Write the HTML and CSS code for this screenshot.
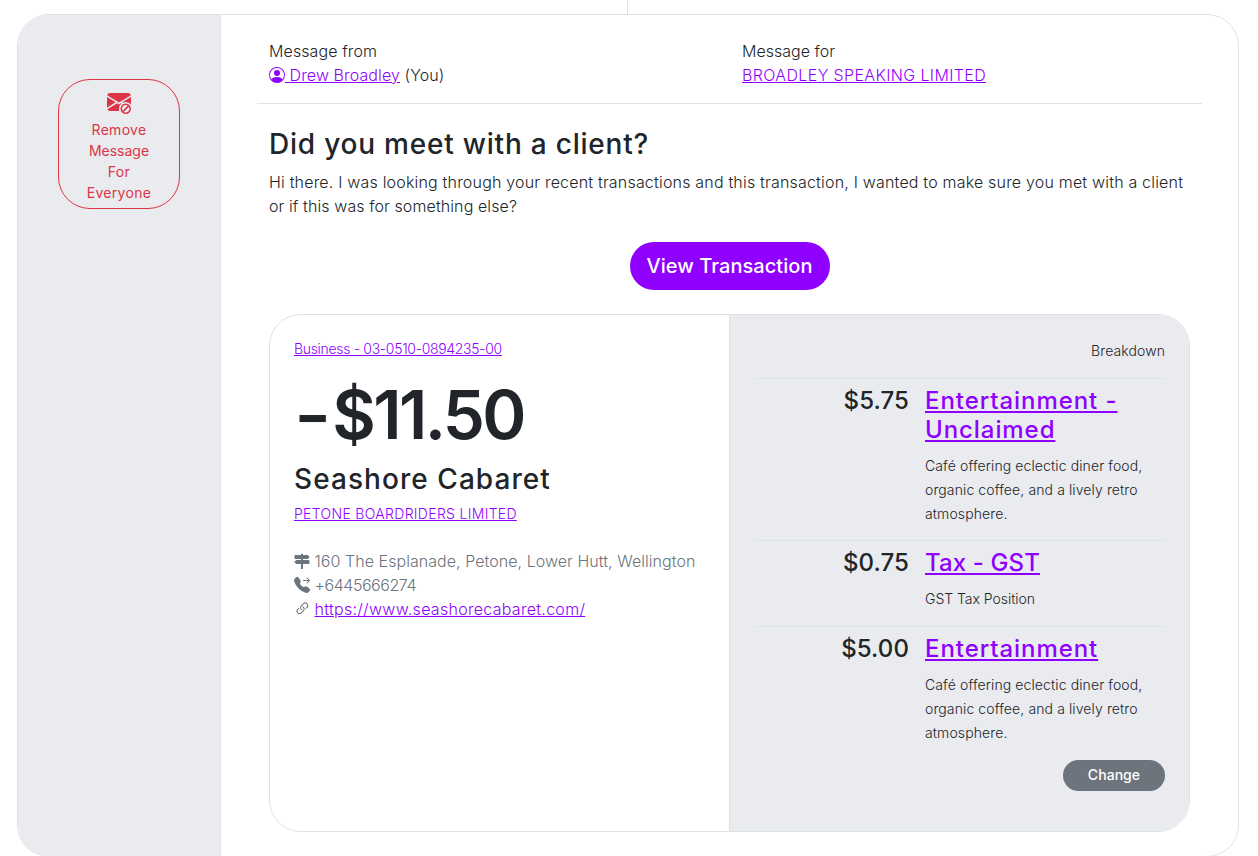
FILE: index.html
```html
<!DOCTYPE html>
<html lang="en">
<head>
<meta charset="utf-8">
<title>Message</title>
<link rel="stylesheet" href="styles.css">
</head>
<body>
<div class="thread-line"></div>
<main class="message">
  <aside class="sidebar">
    <button class="remove">
      <svg class="remove-icon" viewBox="0 0 16 16" fill="currentColor"><path d="M.05 3.555A2 2 0 0 1 2 2h12a2 2 0 0 1 1.950 1.555L8 8.414zM0 4.697v7.104l5.803-3.558zm6.761 4.130-6.570 4.027A2 2 0 0 0 2 14h6.256A4.500 4.500 0 0 1 8 12.500a4.490 4.490 0 0 1 1.606-3.446l-.367-.225L8 9.586zM16 4.697v4.974A4.490 4.490 0 0 0 12.500 8a4.500 4.500 0 0 0-1.965.450l-.338-.207z"/><path d="M12.500 9a3.500 3.500 0 1 1 0 7 3.500 3.500 0 0 1 0-7m-2.500 3.500c0 .501.147.968.400 1.360l3.460-3.460A2.500 2.500 0 0 0 10 12.500m2.500 2.500a2.500 2.500 0 0 0 2.100-3.860l-3.460 3.460c.392.253.860.400 1.360.400"/></svg>
      <span>Remove</span>
      <span class="tight">Message</span>
      <span>For</span>
      <span>Everyone</span>
    </button>
  </aside>
  <section class="content">
    <header class="parties">
      <div class="party">
        <div>Message from</div>
        <div><a class="person" href="#"><svg class="icon" viewBox="0 0 16 16" fill="currentColor"><path d="M11 6a3 3 0 1 1-6 0 3 3 0 0 1 6 0"/><path fill-rule="evenodd" d="M0 8a8 8 0 1 1 16 0A8 8 0 0 1 0 8m8-7a7 7 0 0 0-5.468 11.370C3.242 11.226 4.805 10 8 10s4.757 1.225 5.468 2.370A7 7 0 0 0 8 1"/></svg><span>&nbsp;Drew Broadley</span></a> (You)</div>
      </div>
      <div class="party">
        <div class="recipient-label">Message for</div>
        <div><a class="recipient" href="#">BROADLEY SPEAKING LIMITED</a></div>
      </div>
    </header>
    <div class="body">
      <h2 class="title question">Did you meet with a client?</h2>
      <p class="copy"><span class="copy-lead">Hi there. I was looking through your recent transactions and this transaction, I wanted to make sure you met with a client</span><br>or if this was for something else?</p>
      <button class="view">View Transaction</button>
      <article class="card">
        <div class="merchant">
          <div class="account"><a href="#">Business - 03-0510-0894235-00</a></div>
          <div class="amount"><span class="minus">-</span>$11.50</div>
          <h3 class="title name">Seashore Cabaret</h3>
          <div class="company"><a href="#">PETONE BOARDRIDERS LIMITED</a></div>
          <ul class="contact">
            <li><svg class="icon" viewBox="0 0 16 16" fill="currentColor"><path d="M7 7V6H1.500a1 1 0 0 1-1-1V3a1 1 0 0 1 1-1H7v-.600a1 1 0 0 1 2 0V2h4.500a1 1 0 0 1 .8.400L15.700 4l-1.400 1.600a1 1 0 0 1-.8.400H9v1h5.500a1 1 0 0 1 1 1v2a1 1 0 0 1-1 1H9v5H7v-5H2.500a1 1 0 0 1-.8-.400L.3 9l1.400-1.600a1 1 0 0 1 .8-.400z"/></svg><span class="address">160 The Esplanade, Petone, Lower Hutt, Wellington</span></li>
            <li><svg class="icon" viewBox="0 0 16 16" fill="currentColor"><path d="M1.885.511a1.745 1.745 0 0 1 2.610.163L6.290 2.980c.329.423.445.974.315 1.494l-.547 2.190a.680.680 0 0 0 .178.643l2.457 2.457a.680.680 0 0 0 .644.178l2.189-.547a1.750 1.750 0 0 1 1.494.315l2.306 1.794c.829.645.905 1.870.163 2.611l-1.034 1.034c-.740.740-1.846 1.065-2.877.702a18.600 18.600 0 0 1-7.010-4.420 18.600 18.600 0 0 1-4.420-7.009c-.362-1.030-.037-2.137.703-2.877zM12.646.646a.5.5 0 0 1 .708 0l2.500 2.500a.5.5 0 0 1 0 .708l-2.500 2.500a.5.5 0 0 1-.708-.708L14.293 4H9.500a.5.5 0 0 1 0-1h4.793l-1.647-1.646a.5.5 0 0 1 0-.708"/></svg><span class="phone">+6445666274</span></li>
            <li><svg class="icon link" viewBox="0 0 16 16" fill="currentColor"><path d="M6.354 5.500H4a3 3 0 0 0 0 6h3a3 3 0 0 0 2.830-4H9q-.130 0-.250.031A2 2 0 0 1 7 10.500H4a2 2 0 1 1 0-4h1.535c.218-.376.495-.714.820-1z"/><path d="M9 5.500a3 3 0 0 0-2.830 4h1.098A2 2 0 0 1 9 6.500h3a2 2 0 1 1 0 4h-1.535a4 4 0 0 1-.820 1H12a3 3 0 1 0 0-6z"/></svg><a class="url" href="#">https://www.seashorecabaret.com/</a></li>
          </ul>
        </div>
        <div class="breakdown">
          <div class="label">Breakdown</div>
          <div class="row">
            <div class="price">$5.75</div>
            <div>
              <h4 class="cat"><a href="#">Entertainment -<br>Unclaimed</a></h4>
              <p class="note">Café offering eclectic diner food,<br>organic coffee, and a lively retro<br>atmosphere.</p>
            </div>
          </div>
          <div class="row">
            <div class="price">$0.75</div>
            <div>
              <h4 class="cat tax"><a href="#">Tax - GST</a></h4>
              <p class="note position">GST Tax Position</p>
            </div>
          </div>
          <div class="row">
            <div class="price">$5.00</div>
            <div>
              <h4 class="cat"><a href="#">Entertainment</a></h4>
              <p class="note">Café offering eclectic diner food,<br>organic coffee, and a lively retro<br>atmosphere.</p>
            </div>
          </div>
          <button class="change">Change</button>
        </div>
      </article>
    </div>
  </section>
</main>
</body>
</html>
```
FILE: styles.css
```css
* { box-sizing: border-box; }
html, body { height: 100%; }
body { margin: 0; overflow: hidden; background: #fff; color: #212529; font: 300 16px/24px Inter, "Open Sans", sans-serif; letter-spacing: 0.1px; white-space: nowrap; }
a { color: #8f00ff; text-decoration: underline; }
h2, h3, h4, p, ul { margin: 0; padding: 0; }
button { font-family: inherit; border: 0; margin: 0; letter-spacing: 0.05px; }

.thread-line { width: 1px; height: 14px; margin-left: 627px; background: #dee2e6; }
.message { display: flex; width: 1222px; height: 843px; margin-left: 17px; border: 1px solid #dee2e6; border-radius: 32px; overflow: hidden; }

.sidebar { flex: 0 0 203px; padding: 64px 40px 0; background: #e9ebef; border-right: 1px solid #dee2e6; }
.remove { display: flex; flex-direction: column; align-items: center; width: 122px; height: 130px; padding: 10px 0 0; border: 1px solid #dc3545; border-radius: 32px; background: none; color: #dc3545; font-size: 14px; line-height: 21px; font-weight: 400; letter-spacing: 0.3px; }
.remove .tight { letter-spacing: 0; }
.remove-icon { width: 24px; height: 24px; margin-bottom: 5px; }

.content { flex: 1; padding: 24px 36px 0; }
.parties { display: grid; grid-template-columns: 473px 1fr; height: 65px; padding: 0 12px; border-bottom: 1px solid #dee2e6; }
.person { text-decoration: none; }
.person span { text-decoration: underline; }
.recipient-label { letter-spacing: 0.02px; }
.recipient { letter-spacing: 0.37px; }
.icon { width: 16px; height: 16px; vertical-align: -2px; }

.body { padding: 24px 12px; }
.title { font-weight: 500; font-size: 28px; line-height: 33.6px; }
.question { letter-spacing: 0.78px; }
.copy { margin-top: 8px; }
.copy-lead { letter-spacing: 0.19px; }
.view { display: block; width: 200px; height: 48px; margin: 24px auto; padding: 0; border-radius: 32px; background: #8f00ff; color: #fff; font-size: 20px; font-weight: 500; }

.card { display: grid; grid-template-columns: 459px 1fr; width: 921px; height: 518px; border: 1px solid #dee2e6; border-radius: 32px; overflow: hidden; }
.merchant { padding: 23px 24px; }
.account, .company { font-size: 14px; line-height: 21px; }
.account { letter-spacing: -0.32px; }
.company { margin-top: 7px; letter-spacing: 0.32px; }
.amount { margin-top: 17px; font-size: 67px; font-weight: 600; line-height: 77px; letter-spacing: -2.6px; }
.minus { display: inline-block; margin-right: 7px; letter-spacing: 0; transform: scaleX(1.2); transform-origin: 0 50%; }
.name { margin-top: 10px; letter-spacing: 1.06px; }
.contact { margin-top: 25px; list-style: none; color: #6c757d; }
.contact li { display: flex; align-items: center; gap: 4.5px; }
.address { letter-spacing: 0.05px; }
.phone { letter-spacing: -0.45px; }
.url { letter-spacing: 0.29px; }
.link { transform: translateY(-1px) rotate(-45deg); }

.breakdown { display: flex; flex-direction: column; padding: 24px; background: #e9ebef; border-left: 1px solid #dee2e6; }
.label { height: 39px; font-size: 14px; text-align: right; }
.row { display: grid; grid-template-columns: 155px 1fr; column-gap: 16px; min-height: 86px; padding: 7px 0 14px; border-top: 1px solid #dee2e6; }
.price { text-align: right; font-size: 24px; line-height: 29px; font-weight: 500; letter-spacing: 0.1px; }
.cat { margin-bottom: 10px; font-size: 24px; line-height: 29px; font-weight: 500; letter-spacing: 0.93px; }
.tax { letter-spacing: 0.12px; }
.note { font-size: 14px; letter-spacing: 0.11px; }
.position { letter-spacing: -0.03px; }
.change { align-self: flex-end; width: 102px; height: 31px; margin-top: 1px; padding: 0 0 1px; border-radius: 32px; background: #6c757d; color: #fff; font-size: 14px; font-weight: 500; }
```
